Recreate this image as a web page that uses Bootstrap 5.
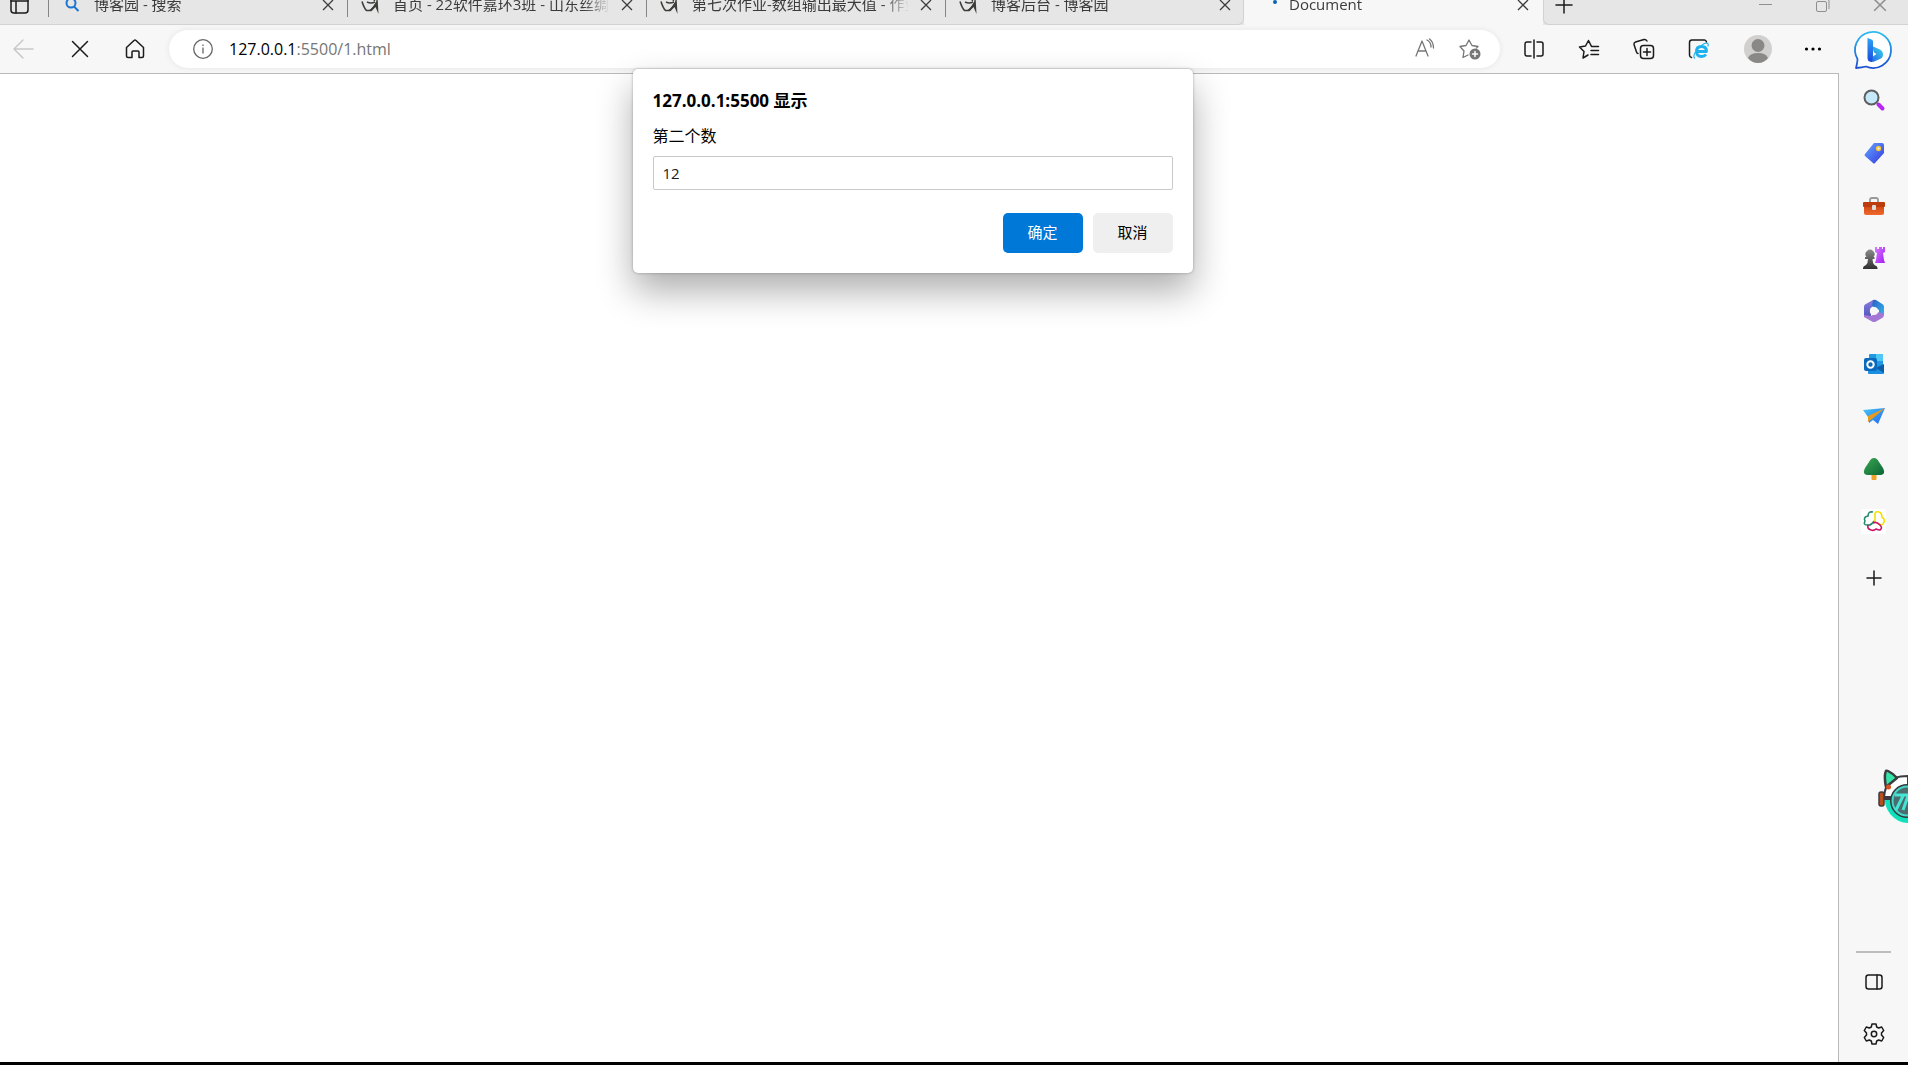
<!DOCTYPE html>
<html lang="zh-CN">
<head>
<meta charset="utf-8">
<meta name="viewport" content="width=device-width, initial-scale=1">
<title>Document</title>
<link href="https://cdn.jsdelivr.net/npm/bootstrap@5.3.0/dist/css/bootstrap.min.css" rel="stylesheet">
<style>
  body { font-family: "Open Sans", "Noto Sans CJK SC", sans-serif; font-size: 15px; line-height: 20px; color: #000; background: #f7f7f7; border-bottom: 3px solid #000; }
  svg { display: block; flex: none; overflow: visible; }
  .ln { fill: none; stroke: currentColor; stroke-width: 1.5; stroke-linecap: round; stroke-linejoin: round; }
  .icon-btn { border: 0; background: none; padding: 0; color: #1b1b1b; display: flex; align-items: center; justify-content: center; flex: none; }

  /* tab strip: its top edge is scrolled above the window */
  .strip { height: 39px; margin-top: -14px; background: #e6e6e6; color: #3b3b3b; flex: none; }
  .strip-side { background: #e6e6e6; border-bottom: 1px solid #d2d2d2; }
  .strip-lead { width: 48px; }
  .tab-item { width: 299px; background: #e6e6e6; border-bottom: 1px solid #d2d2d2; color: #3b3b3b; text-decoration: none; }
  .tab-rule { width: 1px; height: 24px; background: #858585; flex: none; }
  .tab-fav { width: 20px; margin-left: 13px; margin-right: 12px; }
  .tab-name { width: 217px; padding-bottom: 2px; overflow: hidden; white-space: nowrap; -webkit-mask-image: linear-gradient(90deg, #000 88%, transparent); mask-image: linear-gradient(90deg, #000 88%, transparent); }
  .tab-x { width: 34px; color: #3b3b3b; }
  .tab-last { border-right: 1px solid #d2d2d2; border-bottom-right-radius: 6px; }
  .tab-on { background: #f7f7f7; border-bottom-color: #f7f7f7; }
  .strip-end { border-left: 1px solid #d2d2d2; border-bottom-left-radius: 6px; }
  .win-btn { width: 57px; color: #8f8f8f; }

  .toolbar { height: 48px; flex: none; }
  .nav-btn { width: 55px; }
  .nav-back { width: 52px; }
  .nav-more { width: 54px; }
  .omnibox { height: 38px; border-radius: 19px; background: #fff; box-shadow: 0 0 6px rgba(0,0,0,.08); margin-left: 7px; margin-right: 6px; }
  .addr { font-size: 16px; color: #767676; }
  .addr b { font-weight: 400; color: #000; }
  .addr-btn { width: 45px; color: #767676; }
  .viewport-pane { background: #fff; border-top: 1px solid #bababa; border-right: 1px solid #bababa; }

  .rail { width: 69px; }
  .rail-bing { height: 49px; }
  .rail-apps { display: grid; grid-auto-rows: 1fr; height: 474px; width: 100%; }
  .rail-btn { width: 100%; height: 52px; }
  .rail-plus { height: 60px; }
  .rail-rule { width: 35px; height: 2px; background: #bdbdbd; margin-bottom: 3px; }
  .rail-foot { padding-bottom: 2px; }

  .prompt-layer { position: absolute; top: 44px; left: 0; right: 14px; pointer-events: none; }
  .prompt-box { width: 560px; padding: 20px; background: #fff; border-radius: 5px; box-shadow: 0 0 3px rgba(0,0,0,.3), 0 18px 36px rgba(0,0,0,.32); pointer-events: auto; }
  .prompt-title { font-size: 17px; line-height: 24px; font-weight: 700; margin-bottom: 11px; }
  .prompt-label { font-size: 16px; line-height: 24px; margin-bottom: 8px; }
  .prompt-input { height: 34px; font-size: 15px; padding: 0 9px 1px; border: 1px solid #c9c9c9; border-radius: 2px; color: #1b1b1b; }
  .prompt-actions { gap: 10px; margin-top: 23px; }
  .prompt-btn { width: 80px; height: 40px; padding: 0 0 2px; font-size: 15px; border: 0; border-radius: 5px; }
  .prompt-ok { background: #0078d7; color: #fff; }
  .prompt-no { background: #efefef; color: #000; }
  .mascot { position: absolute; right: 0; top: 769px; }
</style>
</head>
<body class="vh-100 d-flex flex-column overflow-hidden position-relative">

<svg width="0" height="0" class="position-absolute" aria-hidden="true">
  <defs>
    <symbol id="close" viewBox="0 0 12 12"><path d="M1 1l10 10M11 1L1 11" fill="none" stroke="currentColor" stroke-width="1.3"/></symbol>
    <symbol id="blog" viewBox="0 0 20 20">
      <path d="M1 6.500Q3 13 5.500 15.500H10Q13 12 15.500 8" fill="none" stroke="#3d3d39" stroke-width="1.6"/>
      <path d="M16.500 1l1 18-3-7-4 4H7q6-4 8-9z" fill="#3d3d39"/>
      <path d="M6 7q4 2 8 0M13 0q2 3 0 6" fill="none" stroke="#3d3d39" stroke-width="1.5"/>
    </symbol>
    <linearGradient id="gBlue" x1="0" y1="0" x2="1" y2="1"><stop offset="0" stop-color="#64a8ff"/><stop offset="1" stop-color="#3437e0"/></linearGradient>
    <linearGradient id="gRed" x1="0" y1="0" x2="0" y2="1"><stop offset="0" stop-color="#c43c0c"/><stop offset="1" stop-color="#ef6a2c"/></linearGradient>
    <linearGradient id="gDark" x1="0" y1="0" x2="0" y2="1"><stop offset="0" stop-color="#8a8a8a"/><stop offset="1" stop-color="#303030"/></linearGradient>
    <linearGradient id="gPink" x1="0" y1="0" x2="1" y2="1"><stop offset="0" stop-color="#d77bff"/><stop offset="1" stop-color="#a41cf5"/></linearGradient>
    <linearGradient id="gTree" x1="0" y1="0" x2="1" y2="1"><stop offset="0" stop-color="#39a852"/><stop offset="1" stop-color="#0c6434"/></linearGradient>
    <linearGradient id="gStem" x1="0" y1="0" x2="0" y2="1"><stop offset="0" stop-color="#2aa4f4"/><stop offset="1" stop-color="#1b48dc"/></linearGradient>
    <linearGradient id="gBowl" x1="1" y1="0" x2="0" y2="1"><stop offset="0" stop-color="#3ed8e8"/><stop offset="1" stop-color="#1d5be6"/></linearGradient>
    <linearGradient id="gRing" x1="0" y1="0" x2="0" y2="1"><stop offset="0" stop-color="#2bbcf0"/><stop offset="1" stop-color="#1d4fd2"/></linearGradient>
    <linearGradient id="gPlane" x1="0" y1="0" x2="1" y2="1"><stop offset="0" stop-color="#46c8f7"/><stop offset="1" stop-color="#2266ee"/></linearGradient>
    <linearGradient id="gHexA" x1="0" y1="0" x2="0" y2="1"><stop offset="0" stop-color="#8a7be0"/><stop offset="1" stop-color="#4653b8"/></linearGradient>
    <linearGradient id="gHexB" x1="0" y1="0" x2="1" y2="1"><stop offset="0" stop-color="#2a5fc4"/><stop offset="1" stop-color="#35b9ee"/></linearGradient>
  </defs>
</svg>

<header class="strip d-flex">
  <div class="strip-side strip-lead d-flex align-items-center">
    <button class="icon-btn ms-2" aria-label="标签页操作">
      <svg width="22" height="18" viewBox="0 0 22 18" class="ln"><rect x="3" y="1" width="17" height="16" rx="3"/><path d="M3 5h17M8 5v12"/></svg>
    </button>
  </div>
  <nav class="d-flex" aria-label="标签页">
    <div class="tab-item d-flex align-items-center">
      <span class="tab-rule"></span>
      <span class="tab-fav"><svg width="20" height="20" viewBox="0 0 20 20" fill="none" stroke="#1976d2" stroke-width="2"><circle cx="9" cy="8" r="4.500"/><path d="M12 11.500l4.500 4.500"/></svg></span>
      <a href="#" class="tab-name text-reset text-decoration-none">博客园 - 搜索</a>
      <button class="icon-btn tab-x" aria-label="关闭"><svg width="12" height="12"><use href="#close"/></svg></button>
    </div>
    <div class="tab-item d-flex align-items-center">
      <span class="tab-rule"></span>
      <span class="tab-fav"><svg width="20" height="20"><use href="#blog"/></svg></span>
      <a href="#" class="tab-name text-reset text-decoration-none">首页 - 22软件嘉环3班 - 山东丝绸</a>
      <button class="icon-btn tab-x" aria-label="关闭"><svg width="12" height="12"><use href="#close"/></svg></button>
    </div>
    <div class="tab-item d-flex align-items-center">
      <span class="tab-rule"></span>
      <span class="tab-fav"><svg width="20" height="20"><use href="#blog"/></svg></span>
      <a href="#" class="tab-name text-reset text-decoration-none">第七次作业-数组输出最大值 - 作业</a>
      <button class="icon-btn tab-x" aria-label="关闭"><svg width="12" height="12"><use href="#close"/></svg></button>
    </div>
    <div class="tab-item tab-last d-flex align-items-center">
      <span class="tab-rule"></span>
      <span class="tab-fav"><svg width="20" height="20"><use href="#blog"/></svg></span>
      <a href="#" class="tab-name text-reset text-decoration-none">博客后台 - 博客园</a>
      <button class="icon-btn tab-x" aria-label="关闭"><svg width="12" height="12"><use href="#close"/></svg></button>
    </div>
    <div class="tab-item tab-on d-flex align-items-center">
      <span class="tab-fav"><svg width="20" height="20"><circle cx="18" cy="7" r="2" fill="#0b64b4"/></svg></span>
      <a href="#" class="tab-name text-reset text-decoration-none">Document</a>
      <button class="icon-btn tab-x" aria-label="关闭"><svg width="12" height="12"><use href="#close"/></svg></button>
    </div>
  </nav>
  <div class="strip-side strip-end d-flex flex-fill">
    <button class="icon-btn ms-2" aria-label="新建标签页"><svg width="24" height="18" viewBox="0 0 24 18" class="ln"><path d="M4 9h16M12 1v16"/></svg></button>
    <button class="icon-btn win-btn ms-auto" aria-label="最小化"><svg width="14" height="12" viewBox="0 0 14 12"><path d="M0 5.500h13" stroke="currentColor"/></svg></button>
    <button class="icon-btn win-btn" aria-label="还原"><svg width="14" height="14" viewBox="0 0 14 14" fill="none" stroke="currentColor"><rect x=".5" y="3.500" width="10" height="10" rx="1.500"/><path d="M3 1h8q2 0 2 2v8"/></svg></button>
    <button class="icon-btn win-btn" aria-label="关闭窗口"><svg width="14" height="14"><use href="#close"/></svg></button>
  </div>
</header>

<div class="d-flex flex-fill">
  <div class="d-flex flex-column flex-fill position-relative">
    <div class="toolbar d-flex align-items-center">
      <button class="icon-btn nav-back" aria-label="后退"><svg width="30" height="20" viewBox="2 0 30 20" class="ln" color="#c9c9c9"><path d="M5 10h19M14 1L5 10l9 9"/></svg></button>
      <button class="icon-btn nav-btn" aria-label="停止"><svg width="18" height="18" viewBox="0 0 18 18" class="ln"><path d="M1.500 1.500l15 15M16.500 1.500l-15 15"/></svg></button>
      <button class="icon-btn nav-btn" aria-label="主页"><svg width="20" height="20" viewBox="0 0 20 20" class="ln"><path d="M1.500 8.500L9 1.500q1-.8 2 0L18.500 8.500V17q0 1.500-1.500 1.500h-3V13q0-1-1-1H8q-1 0-1 1v5.500H3Q1.500 18.500 1.500 17z"/></svg></button>
      <div class="omnibox d-flex align-items-center flex-fill">
        <svg width="20" height="20" viewBox="-2 0 20 20" fill="none" stroke="#666" stroke-width="1.300" class="ms-4"><circle cx="8" cy="10" r="9.300"/><path d="M8 8.500v6M8 5.500v1.500"/></svg>
        <a href="#" class="addr text-decoration-none ms-3"><b>127.0.0.1</b>:5500/1.html</a>
        <button class="icon-btn addr-btn ms-auto" aria-label="大声朗读"><svg width="20" height="20" viewBox="0 0 20 20" class="ln"><path d="M1 17L7 2l6 15M3 12h8M12 1q4 2 4 7M14.500 0q4 3 4 9" stroke-width="1.300"/></svg></button>
        <button class="icon-btn addr-btn me-2" aria-label="收藏"><svg width="22" height="22" viewBox="0 0 22 22" class="ln"><path d="M9 17l-5 2.500 1-6.500L1 8.500l6-1L10 2l3 5.500 6 1-1.500 1.500" stroke-width="1.300"/><circle cx="16" cy="16" r="5.500" fill="currentColor" stroke="none"/><path d="M16 13.500v5M13.500 16h5" stroke="#fff"/></svg></button>
      </div>
      <button class="icon-btn nav-btn" aria-label="分屏"><svg width="20" height="20" viewBox="0 0 20 20" class="ln"><path d="M7 3H3Q1 3 1 5v10q0 2 2 2h4M13 3h4q2 0 2 2v10q0 2-2 2h-4M10 1v18"/></svg></button>
      <button class="icon-btn nav-btn" aria-label="收藏夹"><svg width="22" height="20" viewBox="0 0 22 20" class="ln"><path d="M13.500 7.500L10.500 1.500 7.500 7 1.500 8 6 12.500 5 19l5-3M14 7.500h6.500M13 11.500h7.500M13 15.500h7.500"/></svg></button>
      <button class="icon-btn nav-btn" aria-label="集锦"><svg width="22" height="22" viewBox="0 0 22 22" class="ln"><rect x="7.500" y="7.500" width="13" height="13" rx="3"/><path d="M14 10.500v7M10.500 14h7M5 15.500q-1 0-1.500-1.500L1 6.500Q.8 4.500 2.500 4L11 1.500q2-.3 3 1.500"/></svg></button>
      <button class="icon-btn nav-btn" aria-label="IE 模式"><svg width="22" height="20" viewBox="0 0 22 20" class="ln"><path d="M3.500 18.500Q1.500 18 1.500 16V3.500q0-2.500 2.500-2.500h12.500q1.500 0 2 2"/><path d="M18 15.500Q16.500 17.500 13.500 17.500q-5 0-5-5 0-5 5-5t5 5H9" stroke="#1eb1f0" stroke-width="2.800" stroke-linecap="butt"/><path d="M6.500 19q-2-2 2-7.500Q14 5 18 4q3 0 2 3" stroke="#1eb1f0" stroke-width="1.200"/></svg></button>
      <button class="icon-btn nav-btn ms-1" aria-label="个人资料"><svg width="28" height="28" viewBox="0 0 28 28"><circle cx="14" cy="14" r="14" fill="#d2d0ce"/><circle cx="14" cy="10.500" r="6.500" fill="#8a8886"/><path d="M4 23q2-5 10-5t10 5q-4 5-10 5T4 23z" fill="#8a8886"/></svg></button>
      <button class="icon-btn nav-more" aria-label="设置及其他"><svg width="18" height="6" viewBox="-1 0 18 6"><circle cx="2.500" cy="3" r="1.600"/><circle cx="9" cy="3" r="1.600"/><circle cx="15.500" cy="3" r="1.600"/></svg></button>
    </div>
    <main class="viewport-pane flex-fill"></main>

    <div class="prompt-layer d-flex justify-content-center">
      <form class="prompt-box" role="dialog" aria-labelledby="promptTitle">
        <h1 class="prompt-title" id="promptTitle">127.0.0.1:5500 显示</h1>
        <label class="prompt-label d-block" for="promptValue">第二个数</label>
        <input class="prompt-input form-control" id="promptValue" type="text" value="12">
        <div class="prompt-actions d-flex justify-content-end">
          <button type="button" class="btn prompt-btn prompt-ok">确定</button>
          <button type="button" class="btn prompt-btn prompt-no">取消</button>
        </div>
      </form>
    </div>
  </div>

  <aside class="rail d-flex flex-column align-items-center flex-shrink-0">
    <div class="rail-bing d-flex align-items-center">
      <button class="icon-btn" aria-label="必应"><svg width="38" height="38" viewBox="0 0 38 38"><path d="M1 37Q2.500 31 2.500 28A18 18 0 1 1 11 35.500Q7 36.500 1 37z" fill="#fff" stroke="url(#gRing)" stroke-width="1.800" stroke-linejoin="round"/><path d="M17 15l8 3.500q3 1.500 3 5 0 3-3 4.500l-7 3-5-2 8.500-6-2.500-1.500z" fill="url(#gBowl)"/><path d="M12.500 7l4 1.500q1.500.5 1.500 2V25l-1 6q-4.500 0-4.500-4z" fill="url(#gStem)"/></svg></button>
    </div>
    <div class="rail-apps">
      <button class="icon-btn" aria-label="搜索"><svg width="22" height="22" viewBox="0 0 22 22"><path d="M15.500 15.500l4 4" stroke="#b629f2" stroke-width="4" stroke-linecap="round"/><circle cx="8.500" cy="8.500" r="7" fill="#c5e9fb" stroke="#5e5e5e" stroke-width="2"/></svg></button>
      <button class="icon-btn" aria-label="购物"><svg width="22" height="22" viewBox="0 0 22 22"><path d="M11 1h8q2 0 2 2v8l-9 10q-1 1-2 0l-8-7q-1-1 0-2z" fill="url(#gBlue)"/><circle cx="15.500" cy="6.500" r="2" fill="#e9e9e9" stroke="#f2c230" stroke-width="1.500"/></svg></button>
      <button class="icon-btn" aria-label="工具"><svg width="24" height="20" viewBox="0 0 24 20"><path d="M8 7V4q0-2 2-2h4q2 0 2 2v3" fill="none" stroke="#999" stroke-width="1.800"/><rect x="2" y="7" width="20" height="12" rx="2" fill="url(#gRed)"/><rect x="1" y="6" width="22" height="5" rx="1" fill="#bd3c0e"/><rect x="10" y="9" width="4" height="5" rx="1" fill="#ddd"/></svg></button>
      <button class="icon-btn" aria-label="游戏"><svg width="24" height="24" viewBox="0 0 24 24"><path d="M13 1h2v2h2V1h3v2h1V1h2v5l-2 1 1 7 1 3H13l1-3 1-7-2-1z" fill="url(#gPink)"/><path d="M4.500 11a4.500 4.500 0 1 1 7 0h1v2h-2q0 4 2 6 3 1 3 3v1H1v-1q0-2 3-3 2-2 2-6H3v-2z" fill="url(#gDark)"/></svg></button>
      <button class="icon-btn" aria-label="Microsoft 365"><svg width="22" height="22" viewBox="0 0 22 22"><path d="M10 0L2 4.500Q1 5 1 7v9l7 3.500V14Q6 11 7.500 8.500L10 6z" fill="url(#gHexA)"/><path d="M10 0q2-.5 3 0l7 4.500q1 .5 1 2.500v8l-5 2V10l-7-4z" fill="url(#gHexB)"/><path d="M21 14q0 3-1 3.500l-7 4q-2 1-4 0L1 17V15l7 1 8-4z" fill="#a477d5"/><circle cx="11" cy="11" r="4" fill="#f7f7f7"/></svg></button>
      <button class="icon-btn" aria-label="Outlook"><svg width="22" height="22" viewBox="0 0 22 22"><rect x="6" y="1" width="14" height="14" rx="1" fill="#2298e1"/><path d="M13 1h7v7h-7z" fill="#50c8f5"/><path d="M5 12h16v8q0 1-1 1H6q-1 0-1-1z" fill="#1b8fdf"/><path d="M21 11v9l-8-5z" fill="#0b5da9"/><rect x="1" y="5" width="13" height="13" rx="2" fill="#0869bd"/><circle cx="7.500" cy="11.500" r="3.200" fill="none" stroke="#fff" stroke-width="2"/></svg></button>
      <button class="icon-btn" aria-label="Drop"><svg width="24" height="20" viewBox="0 0 24 20"><path d="M1 4l22-2-7 16-5-4-4 3-1-6z" fill="url(#gPlane)"/><path d="M23 2L6 10v6l4-3z" fill="#e59b22"/></svg></button>
      <button class="icon-btn" aria-label="树木"><svg width="22" height="22" viewBox="0 0 22 22"><rect x="8.500" y="15" width="5" height="7" rx="1" fill="#f0a22a"/><path d="M11 0q3 0 5 4l4 6q3 6-2 7H4q-5-1-2-7l4-6q2-4 5-4z" fill="url(#gTree)"/></svg></button>
      <button class="icon-btn" aria-label="三叶草"><svg width="25" height="25" viewBox="0 0 25 25"><path fill="#fff" d="M0 0h25v25H0z"/><g fill="none" stroke-width="1.600"><path d="M12 3Q7 2 7 7q-5 1-3 5-2 4 2 4 4 1 7-4" stroke="#258a6e"/><path d="M14 13V5q0-3 4-2 3 1 3 5 4 3 1 7-2 2-6-1" stroke="#f2e200"/><path d="M12 14q3-2 7 2 3 3 0 5-2 0-4-1-2 2-5 1-4-1-3-5" stroke="#c9146a"/></g></svg></button>
    </div>
    <button class="icon-btn rail-btn rail-plus" aria-label="添加"><svg width="16" height="16" viewBox="0 0 16 16" class="ln"><path d="M1 8h14M8 1v14"/></svg></button>
    <div class="rail-foot mt-auto w-100 d-flex flex-column align-items-center">
      <div class="rail-rule"></div>
      <button class="icon-btn rail-btn" aria-label="隐藏边栏"><svg width="18" height="16" viewBox="0 0 18 16" class="ln"><rect x="1" y="1" width="16" height="14" rx="2.500"/><path d="M12 1v14"/></svg></button>
      <button class="icon-btn rail-btn" aria-label="设置"><svg width="22" height="22" viewBox="0 0 22 22" class="ln"><path d="M9 1h4l.7 3 2 1 3-1 2 3.500L18.500 10v2l2.200 2.500-2 3.500-3-1-2 1-.7 3H9l-.7-3-2-1-3 1-2-3.500L3.500 12v-2L1.300 7.500l2-3.500 3 1 2-1z"/><circle cx="11" cy="11" r="2.700"/></svg></button>
    </div>
  </aside>
</div>

<svg class="mascot" width="30" height="56" viewBox="0 0 30 56" aria-hidden="true">
  <clipPath id="edge"><path d="M0 0h30v56H0z"/></clipPath>
  <g clip-path="url(#edge)">
    <path d="M7 27a24 24 0 0 0 23 27V27z" fill="#11e0bb"/>
    <path d="M6 28Q7 14 17 9q5-2 13-2v22z" fill="#fff" stroke="#3b3b40" stroke-width="2"/>
    <path d="M8 18Q6 8 7.500 3q.5-2 2.500-1 6 3 9 7z" fill="#35e5a8" stroke="#3b3b40" stroke-width="2.500" stroke-linejoin="round"/>
    <path d="M5 29h12" stroke="#3b3b40" stroke-width="4"/>
    <rect x="1" y="23" width="5" height="14" rx="2" fill="#b9501c" stroke="#3b3b40" stroke-width="1.500"/>
    <circle cx="10.500" cy="18" r="2.500" fill="#d4521b"/>
    <circle cx="29" cy="32" r="17" fill="#30383c"/>
    <circle cx="29" cy="32" r="14.500" fill="#4b6d6e" stroke="#45d7ca" stroke-width="2"/>
    <path d="M17 26h13M25 27L18 41M30 27l-5 14" fill="none" stroke="#45e5d4" stroke-width="3"/>
  </g>
</svg>
<script src="https://cdn.jsdelivr.net/npm/bootstrap@5.3.0/dist/js/bootstrap.bundle.min.js"></script>
</body>
</html>
